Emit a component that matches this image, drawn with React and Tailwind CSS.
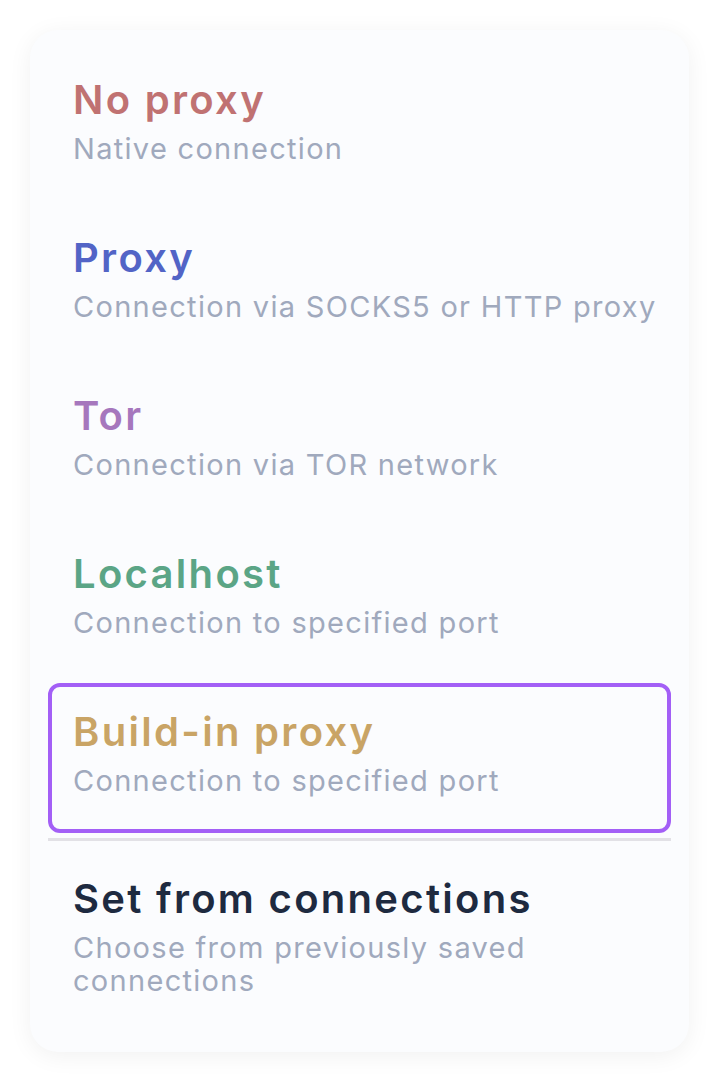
import React from 'react';

const items = [
  { title: 'No proxy', sub: 'Native connection', color: 'text-[#c07272]' },
  { title: 'Proxy', sub: 'Connection via SOCKS5 or HTTP proxy', color: 'text-[#5264c6]' },
  { title: 'Tor', sub: 'Connection via TOR network', color: 'text-[#a677bd]' },
  { title: 'Localhost', sub: 'Connection to specified port', color: 'text-[#5ba586]' },
  { title: 'Build-in proxy', sub: 'Connection to specified port', color: 'text-[#c9a465]', selected: true },
];

const Item = ({ title, sub, color, selected }) => (
  <div
    className={`h-[150px] rounded-[12px] border-4 pl-[21px] pr-[4px] pt-[23px] ${selected ? 'border-[#a35ff6]' : 'border-transparent'}`}
  >
    <p className={`text-[40px] leading-[44px] font-semibold tracking-[2.3px] ${color}`}>{title}</p>
    <p className="mt-[10px] whitespace-nowrap text-[29px] leading-[33px] text-[#a0a9bd] tracking-[1.3px]">{sub}</p>
  </div>
);

export default function App() {
  return (
    <div className="min-h-[1082px] bg-white p-[30px] font-['Inter',sans-serif]">
      <div className="w-[659px] rounded-[28px] bg-[#fbfcfe] px-[18px] pt-[21px] pb-[55px] shadow-[0_4px_24px_rgba(0,0,0,0.06)]">
        <div className="flex flex-col gap-[8px]">
          {items.map((it) => (
            <Item key={it.title} {...it} />
          ))}
        </div>
        <div className="mt-[5px] h-[3px] bg-[#e2e1e6]" />
        <div className="px-[25px] pt-[36px]">
          <p className="text-[40px] leading-[44px] font-semibold tracking-[2.3px] text-[#1e2a40]">Set from connections</p>
          <p className="mt-[10px] w-[500px] text-[29px] leading-[33px] text-[#a0a9bd] tracking-[1.3px]">Choose from previously saved connections</p>
        </div>
      </div>
    </div>
  );
}
